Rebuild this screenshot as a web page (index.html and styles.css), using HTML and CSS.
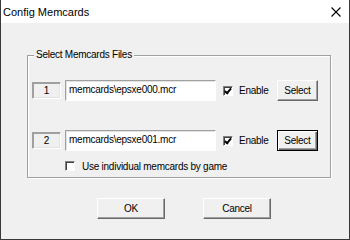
FILE: index.html
```html
<!DOCTYPE html>
<html lang="en">
<head>
    <meta charset="UTF-8">
    <title>Config Memcards</title>
    <link rel="stylesheet" href="styles.css">
</head>
<body>
    <div class="window">
        <!-- Title bar -->
        <div class="titlebar">
            <span class="title">Config Memcards</span>
            <svg class="close" width="10" height="10" viewBox="0 0 10 10">
                <path d="M0.5 0.5 L9.5 9.5 M9.5 0.5 L0.5 9.5" stroke="#000" stroke-width="1.1" fill="none"/>
            </svg>
        </div>

        <!-- Memcard files group -->
        <div class="group">
            <div class="group-title">Select Memcards Files</div>

            <div class="card-row">
                <div class="slot">1</div>
                <div class="path">memcards\epsxe000.mcr</div>
                <span class="check checked"></span>
                <span class="check-label">Enable</span>
                <button class="btn select-btn">Select</button>
            </div>

            <div class="card-row second">
                <div class="slot">2</div>
                <div class="path">memcards\epsxe001.mcr</div>
                <span class="check checked"></span>
                <span class="check-label">Enable</span>
                <button class="btn select-btn default">Select</button>
            </div>

            <div class="option-row">
                <span class="check"></span>
                <span class="check-label">Use individual memcards by game</span>
            </div>
        </div>

        <!-- Dialog buttons -->
        <div class="actions">
            <button class="btn action-btn">OK</button>
            <button class="btn action-btn">Cancel</button>
        </div>
    </div>
</body>
</html>
```

FILE: styles.css
```css
/* General styling */
body {
    margin: 0;
    padding: 0;
    font-family: "Liberation Sans", Arial, sans-serif;
    font-size: 10px;
    letter-spacing: -0.25px;
    color: #000;
}

.window {
    width: 350px;
    height: 240px;
    box-sizing: border-box;
    background-color: #f0f0f0;
    border: 1px solid #3a3a3a;
    border-top: none;
}

/* Title bar */
.titlebar {
    height: 23px;
    background-color: #ffffff;
    display: flex;
    align-items: center;
    justify-content: space-between;
    padding: 0 8px 0 2px;
    box-sizing: border-box;
    margin: 0 -1px 0 -1px;
    border-left: 1px solid #3a3a3a;
    border-right: 1px solid #3a3a3a;
}

.title {
    font-size: 11px;
    letter-spacing: 0;
    padding-top: 1px;
}

.close {
    display: block;
    margin-top: 1px;
}

/* Group box */
.group {
    width: 304px;
    height: 123px;
    box-sizing: border-box;
    margin: 32px 0 0 26px;
    padding: 0 12px 0 4px;
    border: 1px solid #a0a0a0;
    box-shadow: inset 1px 1px #ffffff, 1px 1px #ffffff;
}

.group-title {
    width: max-content;
    margin: -7px 0 0 2px;
    padding: 0 2px;
    line-height: 12px;
    background-color: #f0f0f0;
}

.card-row {
    display: flex;
    align-items: center;
    height: 21px;
    margin-top: 19px;
}

.card-row.second {
    margin-top: 29px;
}

.slot {
    width: 29px;
    height: 17px;
    box-sizing: border-box;
    display: flex;
    align-items: center;
    justify-content: center;
    border: 1px solid;
    border-color: #a0a0a0 #ffffff #ffffff #a0a0a0;
    box-shadow: inset 1px 1px #a0a0a0, inset -1px -1px #e3e3e3;
}

.path {
    width: 151px;
    height: 21px;
    box-sizing: border-box;
    margin-left: 4px;
    padding: 0 0 0 3px;
    line-height: 18px;
    background-color: #ffffff;
    border: 1px solid;
    border-color: #a0a0a0 #ffffff #ffffff #a0a0a0;
    box-shadow: inset 1px 1px #e3e3e3;
    white-space: nowrap;
}

/* Checkboxes */
.check {
    position: relative;
    width: 10px;
    height: 10px;
    box-sizing: border-box;
    flex: none;
    background-color: #ffffff;
    border: 1px solid;
    border-color: #808080 #ffffff #ffffff #808080;
    box-shadow: inset 1px 1px #404040;
}

.card-row .check {
    margin-left: 7px;
}

.check.checked::after {
    content: "";
    position: absolute;
    left: 2px;
    top: 0px;
    width: 2px;
    height: 5px;
    border: solid #000;
    border-width: 0 2px 2px 0;
    transform: rotate(40deg);
}

.check-label {
    margin-left: 6px;
    white-space: nowrap;
}

.option-row {
    display: flex;
    align-items: center;
    height: 10px;
    margin: 10px 0 0 33px;
}

.option-row .check-label {
    margin-left: 7px;
}

/* Buttons */
.btn {
    font-family: inherit;
    font-size: 10px;
    letter-spacing: -0.25px;
    color: #000;
    background-color: #f0f0f0;
    padding: 0;
    border: 1px solid;
    border-color: #ffffff #696969 #696969 #ffffff;
    box-shadow: inset -1px -1px #a0a0a0;
    box-sizing: border-box;
}

.select-btn {
    width: 41px;
    height: 21px;
    margin-left: auto;
}

.select-btn.default {
    border-color: #000;
    box-shadow: inset 1px 1px #ffffff, inset -1px -1px #696969, inset -2px -2px #a0a0a0;
}

.actions {
    display: flex;
    gap: 38px;
    margin-top: 20px;
    padding-left: 96px;
}

.action-btn {
    width: 68px;
    height: 21px;
}
```
